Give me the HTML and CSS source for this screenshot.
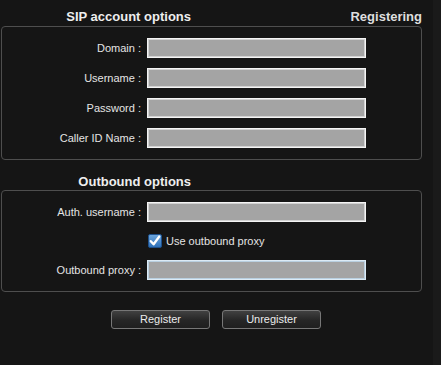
FILE: index.html
```html
<!DOCTYPE html>
<html>
<head>
<meta charset="utf-8">
<link rel="stylesheet" href="styles.css">
</head>
<body>
<div class="page">
  <div class="head head-first">
    <div class="title">SIP account options</div>
    <div class="status">Registering</div>
  </div>
  <div class="box">
    <label class="lbl">Domain :</label><input class="field" type="text">
    <label class="lbl">Username :</label><input class="field" type="text">
    <label class="lbl">Password :</label><input class="field" type="password">
    <label class="lbl">Caller ID Name :</label><input class="field" type="text">
  </div>
  <div class="head head-second">
    <div class="title">Outbound options</div>
  </div>
  <div class="box">
    <label class="lbl">Auth. username :</label><input class="field" type="text">
    <span></span>
    <div class="check-row">
      <svg class="check" width="14" height="14" viewBox="0 0 14 14">
        <defs>
          <linearGradient id="cb" x1="0" y1="0" x2="0" y2="1">
            <stop offset="0" stop-color="#6fa8de"/>
            <stop offset="1" stop-color="#2c6fb8"/>
          </linearGradient>
        </defs>
        <rect x="0.5" y="0.5" width="13" height="13" rx="1.5" fill="url(#cb)" stroke="#1d4f8a"/>
        <path d="M2.8 7.2 L5.6 10.3 L11.2 2.6" fill="none" stroke="#ffffff" stroke-width="2.4" stroke-linecap="round" stroke-linejoin="round"/>
      </svg>
      <span class="check-text">Use outbound proxy</span>
    </div>
    <label class="lbl">Outbound proxy :</label><input class="field field-focus" type="text">
  </div>
  <div class="buttons">
    <button class="btn">Register</button>
    <button class="btn">Unregister</button>
  </div>
</div>
</body>
</html>
```

FILE: styles.css
```css
html, body {
  margin: 0;
  padding: 0;
}
body {
  width: 441px;
  height: 365px;
  background: linear-gradient(to right, #151515 433px, #1a1a1a 433px);
  font-family: "Liberation Sans", Arial, sans-serif;
  font-size: 11px;
  color: #e6e6e6;
  overflow: hidden;
}
.page {
  width: 421px;
  padding-left: 1px;
}
.head {
  display: flex;
  justify-content: space-between;
  align-items: flex-start;
  box-sizing: border-box;
  font-size: 13px;
  font-weight: bold;
  line-height: 15px;
  color: #eeeeee;
}
.head-first {
  height: 26px;
  padding-top: 9px;
}
.head-second {
  height: 30px;
  padding-top: 14px;
}
.title {
  width: 190px;
  text-align: right;
}
.status {
  color: #dedede;
}
.box {
  border: 1px solid #4e4e4e;
  border-radius: 4px;
  padding: 11px 0 11px 0;
  display: grid;
  grid-template-columns: 139px 219px;
  column-gap: 6px;
  row-gap: 10px;
  align-items: center;
}
.lbl {
  text-align: right;
  color: #e4e4e4;
  line-height: 13px;
}
.field {
  box-sizing: border-box;
  width: 219px;
  height: 20px;
  margin: 0;
  padding: 0;
  background: #a4a4a4;
  border: 1px solid #f4f4f4;
  box-shadow: inset 0 0 0 1px #d2d2d2;
  outline: none;
}
.field-focus {
  border-color: #dceaf4;
  box-shadow: inset 0 0 0 1px #b9cfdf;
}
.check-row {
  display: flex;
  align-items: center;
  height: 18px;
  gap: 4px;
  padding-left: 1px;
}
.check {
  display: block;
  flex: none;
}
.check-text {
  color: #e4e4e4;
  line-height: 13px;
}
.buttons {
  display: flex;
  gap: 12px;
  padding-left: 110px;
  margin-top: 18px;
}
.btn {
  box-sizing: border-box;
  width: 99px;
  height: 19px;
  margin: 0;
  padding: 0;
  border: 1px solid #777777;
  border-radius: 3px;
  background: linear-gradient(#414141, #262626 55%, #1f1f1f);
  color: #ececec;
  font-family: "Liberation Sans", Arial, sans-serif;
  font-size: 11px;
  line-height: 17px;
}
```
